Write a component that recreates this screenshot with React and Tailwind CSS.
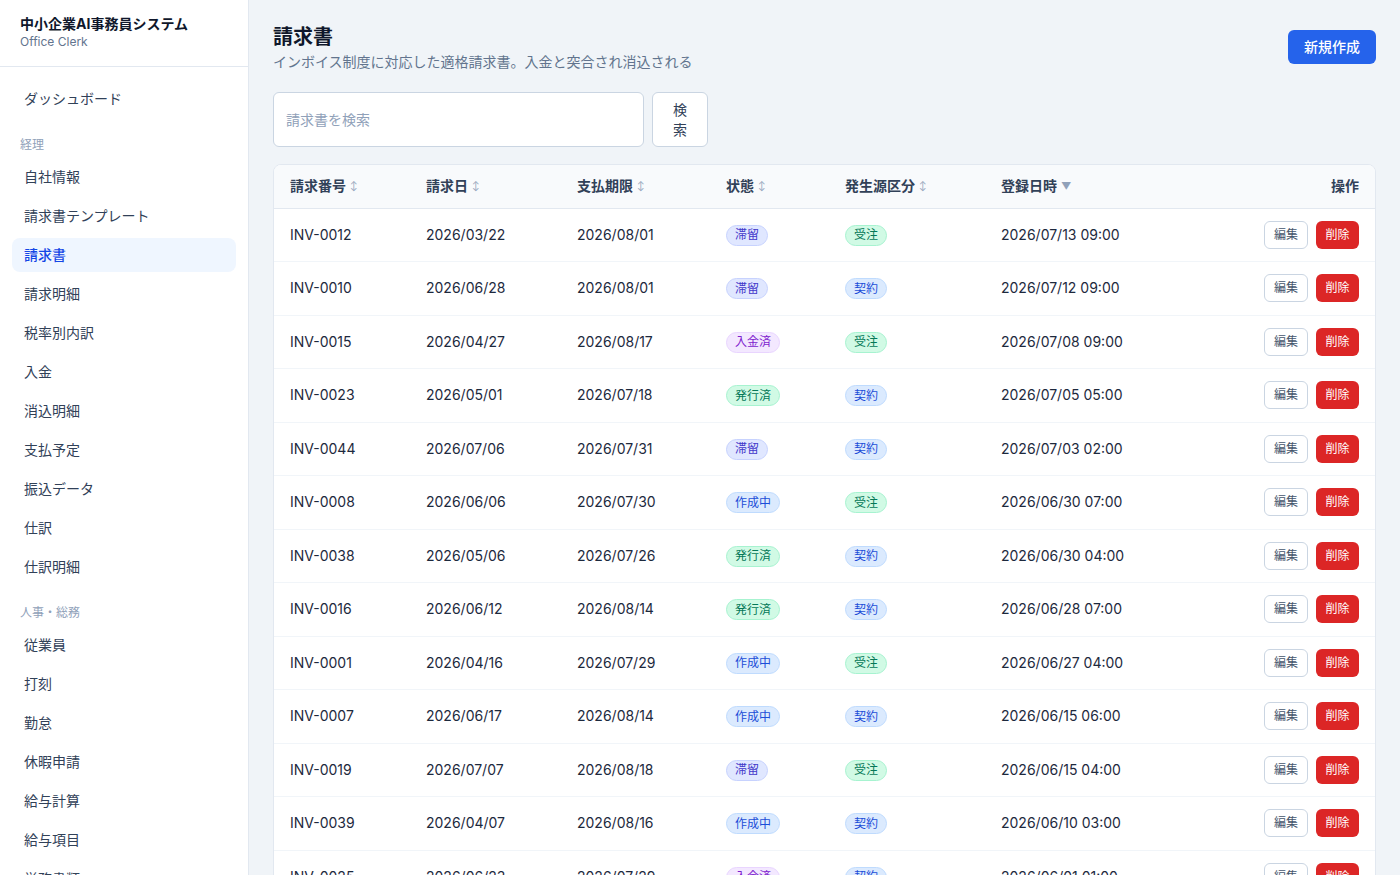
import React from "react";

const navGroups = [
  { label: null, items: ["ダッシュボード"] },
  {
    label: "経理",
    items: ["自社情報", "請求書テンプレート", "請求書", "請求明細", "税率別内訳", "入金", "消込明細", "支払予定", "振込データ", "仕訳", "仕訳明細"],
  },
  {
    label: "人事・総務",
    items: ["従業員", "打刻", "勤怠", "休暇申請", "給与計算", "給与項目", "労務書類"],
  },
];

const invoices = [
  ["INV-0012", "2026/03/22", "2026/08/01", "滞留", "受注", "2026/07/13 09:00"],
  ["INV-0010", "2026/06/28", "2026/08/01", "滞留", "契約", "2026/07/12 09:00"],
  ["INV-0015", "2026/04/27", "2026/08/17", "入金済", "受注", "2026/07/08 09:00"],
  ["INV-0023", "2026/05/01", "2026/07/18", "発行済", "契約", "2026/07/05 05:00"],
  ["INV-0044", "2026/07/06", "2026/07/31", "滞留", "契約", "2026/07/03 02:00"],
  ["INV-0008", "2026/06/06", "2026/07/30", "作成中", "受注", "2026/06/30 07:00"],
  ["INV-0038", "2026/05/06", "2026/07/26", "発行済", "契約", "2026/06/30 04:00"],
  ["INV-0016", "2026/06/12", "2026/08/14", "発行済", "契約", "2026/06/28 07:00"],
  ["INV-0001", "2026/04/16", "2026/07/29", "作成中", "受注", "2026/06/27 04:00"],
  ["INV-0007", "2026/06/17", "2026/08/14", "作成中", "契約", "2026/06/15 06:00"],
  ["INV-0019", "2026/07/07", "2026/08/18", "滞留", "受注", "2026/06/15 04:00"],
  ["INV-0039", "2026/04/07", "2026/08/16", "作成中", "契約", "2026/06/10 03:00"],
  ["INV-0025", "2026/06/23", "2026/07/29", "入金済", "契約", "2026/06/01 01:00"],
];

// バッジの色
const badgeStyles = {
  滞留: "bg-[#e0e7ff] text-[#4338ca] border-[#c7d2fe]",
  入金済: "bg-[#f3e8ff] text-[#7e22ce] border-[#e9d5ff]",
  発行済: "bg-[#d1fae5] text-[#047857] border-[#a7f3d0]",
  作成中: "bg-[#dbeafe] text-[#1d4ed8] border-[#bfdbfe]",
  受注: "bg-[#d1fae5] text-[#047857] border-[#a7f3d0]",
  契約: "bg-[#dbeafe] text-[#1d4ed8] border-[#bfdbfe]",
};

function Badge({ children }) {
  return (
    <span className={`inline-flex items-center h-[21px] px-2 rounded-full border text-xs ${badgeStyles[children]}`}>
      {children}
    </span>
  );
}

function SortHead({ children, active }) {
  return (
    <span className="inline-flex items-center gap-1">
      {children}
      {active ? (
        <span className="text-[10px] text-slate-400">▼</span>
      ) : (
        <span className="text-[9px] text-slate-400 font-normal">↕</span>
      )}
    </span>
  );
}

export default function App() {
  return (
    <div
      className="flex h-[875px] overflow-hidden bg-[#f0f4f8] text-slate-800"
      style={{ fontFamily: 'Inter, "Noto Sans CJK JP", sans-serif' }}
    >
      {/* Sidebar */}
      <aside className="w-[249px] shrink-0 bg-white border-r border-slate-200 flex flex-col">
        <div className="px-5 pt-[14px] pb-4 border-b border-slate-200">
          <div className="text-sm font-bold text-slate-900 leading-5">中小企業AI事務員システム</div>
          <div className="text-xs text-slate-500 leading-4">Office Clerk</div>
        </div>
        <nav className="px-3 pt-[15px] flex flex-col">
          {navGroups.map((g, gi) => (
            <div key={gi} className="flex flex-col">
              {g.label && (
                <div className="px-2 mt-[21px] mb-[7px] text-xs text-slate-400 leading-4">{g.label}</div>
              )}
              <div className="flex flex-col gap-[5px]">
                {g.items.map((item) => (
                  <div
                    key={item}
                    className={`h-[34px] px-3 flex items-center rounded-lg text-sm ${
                      item === "請求書" ? "bg-blue-50 text-blue-700 font-medium" : "text-slate-700"
                    }`}
                  >
                    {item}
                  </div>
                ))}
              </div>
            </div>
          ))}
        </nav>
      </aside>

      {/* Main */}
      <main className="flex-1 px-6 pt-[23px] overflow-hidden">
        <div className="flex items-start justify-between">
          <div>
            <h1 className="text-xl font-bold text-slate-900 leading-7">請求書</h1>
            <p className="text-sm text-slate-500 leading-5 mt-px">
              インボイス制度に対応した適格請求書。入金と突合され消込される
            </p>
          </div>
          <button className="mt-[7px] h-[34px] px-4 rounded-md bg-[#2563eb] text-white text-sm font-medium">
            新規作成
          </button>
        </div>

        <div className="mt-5 flex gap-2">
          <input
            placeholder="請求書を検索"
            className="w-[371px] h-[55px] px-3 rounded-md border border-slate-300 bg-white text-sm placeholder:text-slate-400 outline-none"
          />
          <button className="w-[56px] h-[55px] px-4 rounded-md border border-slate-300 bg-white text-sm text-slate-700 leading-5">
            検索
          </button>
        </div>

        <div className="mt-[17px] bg-white border border-slate-200 rounded-lg overflow-hidden">
          <table className="w-full table-fixed text-sm">
            <colgroup>
              <col className="w-[136px]" />
              <col className="w-[151px]" />
              <col className="w-[149px]" />
              <col className="w-[119px]" />
              <col className="w-[156px]" />
              <col />
              <col className="w-[200px]" />
            </colgroup>
            <thead>
              <tr className="h-[43px] bg-slate-50 border-b border-slate-200 text-left text-slate-700 font-bold">
                <th className="px-4 font-bold"><SortHead>請求番号</SortHead></th>
                <th className="px-4 font-bold"><SortHead>請求日</SortHead></th>
                <th className="px-4 font-bold"><SortHead>支払期限</SortHead></th>
                <th className="px-4 font-bold"><SortHead>状態</SortHead></th>
                <th className="px-4 font-bold"><SortHead>発生源区分</SortHead></th>
                <th className="px-4 font-bold"><SortHead active>登録日時</SortHead></th>
                <th className="px-4 font-bold text-right">操作</th>
              </tr>
            </thead>
            <tbody>
              {invoices.map((r) => (
                <tr key={r[0]} className="h-[53.5px] border-b border-slate-100 text-slate-800">
                  <td className="px-4">{r[0]}</td>
                  <td className="px-4">{r[1]}</td>
                  <td className="px-4">{r[2]}</td>
                  <td className="px-4"><Badge>{r[3]}</Badge></td>
                  <td className="px-4"><Badge>{r[4]}</Badge></td>
                  <td className="px-4">{r[5]}</td>
                  <td className="px-4">
                    <div className="flex justify-end gap-2">
                      <button className="h-[28px] w-[44px] rounded-md border border-slate-300 bg-white text-xs text-slate-600">
                        編集
                      </button>
                      <button className="h-[28px] w-[43px] rounded-md bg-[#dc2626] text-xs text-white">
                        削除
                      </button>
                    </div>
                  </td>
                </tr>
              ))}
            </tbody>
          </table>
        </div>
      </main>
    </div>
  );
}
